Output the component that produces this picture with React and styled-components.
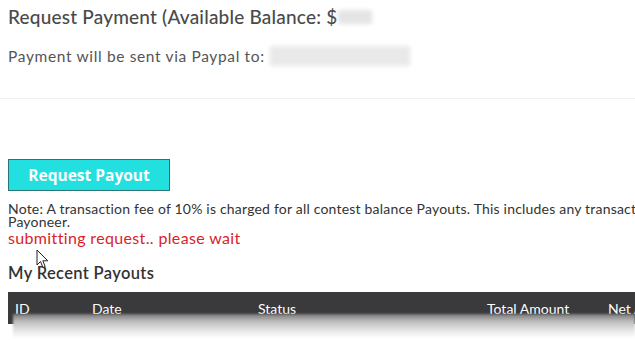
import React from "react";
import styled, { createGlobalStyle } from "styled-components";

const Global = createGlobalStyle`
  html, body { margin: 0; padding: 0; background: #fff; overflow: hidden; }
  body { font-family: Lato, "Open Sans", "Liberation Sans", sans-serif; width: 635px; height: 340px; }
`;

const Page = styled.div`
  position: relative;
  padding: 0 0 0 8px;
  width: 635px;
  box-sizing: border-box;
  overflow: hidden;
  height: 340px;
`;

const Top = styled.section`
  padding-top: 6px;
  padding-bottom: 31px;
  border-bottom: 1px solid #f1f1f1;
  margin-left: -8px;
  padding-left: 8px;
`;

const Title = styled.h2`
  margin: 0;
  font-size: 19px;
  font-weight: 500;
  letter-spacing: 0.2px;
  color: #4a4a4a;
  line-height: 22px;
  display: flex;
  align-items: center;
`;

const Line = styled.p`
  margin: 17px 0 0;
  font-size: 15.5px;
  letter-spacing: 0.65px;
  color: #555;
  line-height: 22px;
  display: flex;
  align-items: center;
`;

const Blur = styled.span`
  display: inline-block;
  width: ${(p) => p.$w}px;
  height: ${(p) => p.$h}px;
  margin-left: ${(p) => p.$ml || 4}px;
  background: ${(p) => p.$c || "#e4e4e4"};
  filter: blur(2px);
  border-radius: 2px;
`;

const Action = styled.div`
  padding-top: 60px;
`;

const Button = styled.button`
  width: 162px;
  height: 32px;
  background: #22e0e0;
  border: 1px solid #2b7474;
  color: #fff;
  font-family: "Open Sans", Lato, sans-serif;
  font-weight: 700;
  font-size: 15.5px;
  padding: 0;
  cursor: pointer;
`;

const Note = styled.p`
  margin: 11px 0 0;
  font-size: 14px;
  letter-spacing: 0.2px;
  line-height: 13px;
  color: #333;
  white-space: nowrap;
`;

const Status = styled.p`
  margin: 1px 0 0;
  font-size: 16px;
  letter-spacing: 0.35px;
  line-height: 18px;
  color: #d8232a;
`;

const Heading = styled.h3`
  margin: 16px 0 0;
  font-size: 16.5px;
  font-weight: 600;
  letter-spacing: 0.35px;
  line-height: 20px;
  color: #333;
`;

const Table = styled.div`
  margin-top: 9px;
  position: relative;
`;

const HeadRow = styled.div`
  display: grid;
  grid-template-columns: 77px 166px 229px 121px 1fr;
  height: 32px;
  align-items: center;
  background: #3a3a3c;
  color: #fff;
  font-size: 14px;
  padding-left: 7px;
  white-space: nowrap;
`;

const Fade = styled.div`
  position: absolute;
  left: 5px;
  right: 0;
  top: 22px;
  height: 30px;
  background: linear-gradient(to bottom, #7a7a7a 0%, #bdbdbd 25%, #e6e6e6 55%, #fff 80%);
  filter: blur(1px);
`;

const Cursor = styled.svg`
  position: absolute;
  left: 36px;
  top: 249px;
`;

export default function App() {
  return (
    <>
      <Global />
      <Page>
        <Top>
          <Title>
            Request Payment (Available Balance: $<Blur $w={34} $h={14} $ml={1} />
          </Title>
          <Line>
            Payment will be sent via Paypal to:<Blur $w={140} $h={20} $ml={5} $c="#e9e9e9" />
          </Line>
        </Top>
        <Action>
          <Button>Request Payout</Button>
        </Action>
        <Note>
          Note: A transaction fee of 10% is charged for all contest balance Payouts. This includes any transaction fees charged by Paypal or
          <br />
          Payoneer.
        </Note>
        <Status>submitting request.. please wait</Status>
        <Heading>My Recent Payouts</Heading>
        <Table>
          <HeadRow>
            <span>ID</span>
            <span>Date</span>
            <span>Status</span>
            <span>Total Amount</span>
            <span>Net Amount</span>
          </HeadRow>
          <Fade />
        </Table>
        <Cursor width="13" height="20" viewBox="0 0 13 20">
          <path d="M1 1 L1 16 L4.5 12.5 L7 18.5 L9.2 17.6 L6.8 11.8 L11.8 11.8 Z" fill="#fff" stroke="#222" strokeWidth="1" strokeLinejoin="miter" />
        </Cursor>
      </Page>
    </>
  );
}
